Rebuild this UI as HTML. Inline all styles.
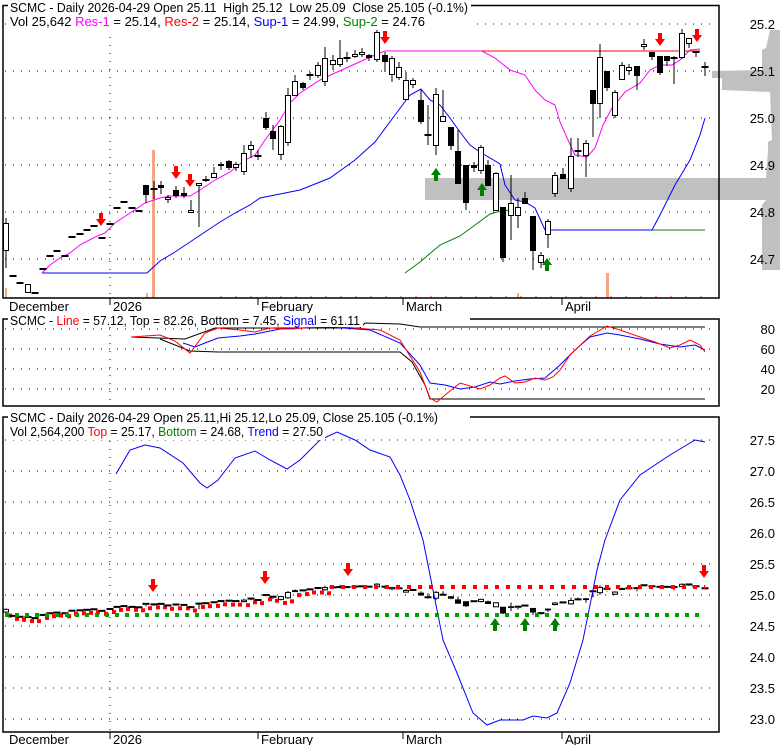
<!DOCTYPE html>
<html><head><meta charset="utf-8"><style>
html,body{margin:0;padding:0;background:#fff;}
svg{display:block;font-family:"Liberation Sans",Arial,sans-serif;}
</style></head><body>
<svg id="s" width="780" height="745" xmlns="http://www.w3.org/2000/svg">
<g id="bg"></g>
<polygon fill="#c0c0c0" points="780,30 770,30 766,48 762,50 762,70 712,71 712,78 722,78 722,90 770,92 772,140 768,142 768,150 766,178 425,178 425,200 766,200 762,205 762,270 768,270 780,270"/>
<g id="grid" stroke="#000" stroke-width="1" stroke-dasharray="1,7" fill="none"></g>
<g fill="#f4a582">
<rect x="152" y="150" width="3" height="148"/>
<rect x="606" y="273" width="3" height="25"/>
<rect x="5" y="288" width="2" height="10"/>
<rect x="146" y="293" width="2" height="5"/>
<rect x="517" y="293" width="2" height="5"/>
</g>
<g id="vticks" fill="#f4a582"></g>
<polyline fill="none" stroke="#008000" points="405,273 420,262 440,245 460,236 475,225 490,214 497,212 510,210" />
<polyline fill="none" stroke="#008000" points="652,230 705,230" />
<polyline fill="none" stroke="#0000ff" points="42,273 147,273 160,261 175,252 190,242 205,232 220,222 235,213 250,205 260,198 280,194 300,190 330,178 355,160 375,142 395,115 410,95 421,89 430,100 440,105 450,118 460,132 470,145 480,152 500,164 505,185 515,200 525,202 535,208 545,230 652,230 660,215 675,185 690,160 700,135 705,118" />
<polyline fill="none" stroke="#ff00ff" points="42,273 50,265 60,258 70,253 80,245 95,237 105,233 115,223 130,213 145,203 160,198 170,196 190,196 200,190 215,180 230,172 245,160 255,155 265,140 280,120 290,103 300,93 320,80 335,73 355,64 370,57 385,51 482,51 495,58 510,70 525,75 535,90 545,100 555,105 560,122 568,140 575,155 587,157 595,148 603,125 612,108 625,92 640,83 650,70 660,65 672,65 680,60 690,50 700,49" />
<line x1="482" y1="51" x2="700" y2="51" stroke="#ff0000"/>
<g id="candles"></g>
<g id="lower"></g>
<polyline fill="none" stroke="#000" points="131,337 185,339 215,328 360,328 365,323 400,324 420,327 705,327"/>
<polyline fill="none" stroke="#000" points="160,339 190,351 218,352 400,352 412,362 425,385 430,399 705,399"/>
<polyline fill="none" stroke="#0000ff" points="183,343 195,347 205,343 218,338 240,336 255,334 280,329 300,328 330,327 370,330 400,343 420,365 430,383 445,385 460,389 475,387 490,382 500,384 515,381 530,379 545,378 560,365 575,350 590,337 607,333 620,335 640,339 660,344 680,347 695,345 705,350"/>
<polyline fill="none" stroke="#ff0000" points="131,337 160,335 175,341 190,353 205,333 218,328 240,330 255,332 270,328 290,329 330,326 380,330 400,340 420,372 430,398 437,402 445,395 460,383 480,389 490,385 500,378 505,376 515,383 525,382 535,378 545,380 553,377 560,370 570,355 590,336 607,326 620,330 640,337 655,342 670,348 680,345 690,340 700,345 705,352"/>
<polyline fill="none" stroke="#0000ff" points="116,474 130,450 145,445 160,448 183,463 200,483 207,488 218,480 235,458 255,451 270,460 287,469 300,460 320,440 337,432 355,440 370,450 390,457 400,475 410,500 423,540 443,640 457,673 473,713 487,725 500,720 523,720 533,716 547,718 557,713 570,683 583,640 597,570 605,540 620,500 640,475 670,455 695,440 705,442"/>
<line x1="330" y1="587" x2="705" y2="587" stroke="#ff0000" stroke-width="4" stroke-dasharray="4,7"/>
<line x1="5" y1="615" x2="705" y2="615" stroke="#00a000" stroke-width="4" stroke-dasharray="4,6"/>
<g id="arrows"></g>
<g stroke="#000" fill="none" stroke-width="1.5">
<polyline points="470,5.5 719,5.5 719,298 3,298 3,5.5 8,5.5"/>
<polyline points="470,319 719,319 719,406 3,406 3,319 8,319"/>
<polyline points="470,417 719,417 719,732 3,732 3,417 8,417"/>
</g>
<g stroke="#000">
<line x1="110" y1="298" x2="110" y2="305"/><line x1="258" y1="298" x2="258" y2="305"/><line x1="403" y1="298" x2="403" y2="305"/><line x1="562" y1="298" x2="562" y2="305"/>
<line x1="110" y1="732" x2="110" y2="739"/><line x1="258" y1="732" x2="258" y2="739"/><line x1="403" y1="732" x2="403" y2="739"/><line x1="562" y1="732" x2="562" y2="739"/>
</g>
<g font-size="13" fill="#000">
<rect x="9" y="0" width="462" height="30" fill="#fff"/>
<text x="10" y="12" textLength="458" lengthAdjust="spacingAndGlyphs" xml:space="preserve">SCMC - Daily 2026-04-29 Open 25.11  High 25.12  Low 25.09  Close 25.105 (-0.1%)</text>
<text x="10" y="26">Vol 25,642 <tspan fill="#ff00ff">Res-1</tspan> = 25.14, <tspan fill="#ff0000">Res-2</tspan> = 25.14, <tspan fill="#0000ff">Sup-1</tspan> = 24.99, <tspan fill="#008000">Sup-2</tspan> = 24.76</text>
<text x="9" y="311">December</text><text x="113" y="311">2026</text><text x="261" y="311">February</text><text x="406" y="311">March</text><text x="565" y="311">April</text>
<rect x="9" y="313" width="354" height="14" fill="#fff"/>
<text x="10" y="325" textLength="350" lengthAdjust="spacingAndGlyphs">SCMC - <tspan fill="#ff0000">Line</tspan> = 57.12, Top = 82.26, Bottom = 7.45, <tspan fill="#0000ff">Signal</tspan> = 61.11</text>
<rect x="9" y="410" width="432" height="16" fill="#fff"/>
<rect x="9" y="426" width="316" height="14" fill="#fff"/>
<text x="10" y="422" textLength="428" lengthAdjust="spacingAndGlyphs">SCMC - Daily 2026-04-29 Open 25.11,Hi 25.12,Lo 25.09, Close 25.105 (-0.1%)</text>
<text x="10" y="436" textLength="313" lengthAdjust="spacingAndGlyphs">Vol 2,564,200 <tspan fill="#ff0000">Top</tspan> = 25.17, <tspan fill="#008000">Bottom</tspan> = 24.68, <tspan fill="#0000ff">Trend</tspan> = 27.50</text>
<text x="9" y="744">December</text><text x="113" y="744">2026</text><text x="261" y="744">February</text><text x="406" y="744">March</text><text x="565" y="744">April</text>
<g id="ylab"></g>
</g>
</svg>
<script>
var NS="http://www.w3.org/2000/svg";
function el(p,t,a){var e=document.createElementNS(NS,t);for(var k in a)e.setAttribute(k,a[k]);document.getElementById(p).appendChild(e);return e;}
[24,71,118,165,212,259].forEach(function(y){el('grid','line',{x1:5,y1:y,x2:715,y2:y});});
[329,349,369,389].forEach(function(y){el('grid','line',{x1:5,y1:y,x2:715,y2:y});});
[440,471,502,533,564,595,626,657,688,719].forEach(function(y){el('grid','line',{x1:5,y1:y,x2:715,y2:y});});
[[5,298],[319,406],[417,732]].forEach(function(r){el('grid','line',{x1:110,y1:r[0],x2:110,y2:r[1]});});
for(var x=220;x<715;x+=15){el('vticks','rect',{x:x,y:296,width:2,height:2});}
var yl=[["25.2",24],["25.1",71],["25.0",118],["24.9",165],["24.8",212],["24.7",259],["80",329],["60",349],["40",369],["20",389],
["27.5",440],["27.0",471],["26.5",502],["26.0",533],["25.5",564],["25.0",595],["24.5",626],["24.0",657],["23.5",688],["23.0",719]];
yl.forEach(function(l){var t=el('ylab','text',{x:775,y:l[1]+5,'text-anchor':'end'});t.textContent=l[0];});
var C=[[6,223,251,0,218,268],[13,276,276,2],[20,283,283,2],[28,284,293,0,284,293],[35,293,293,2],[43,269,269,2],[50,256,256,2],[57,251,251,2],[65,256,256,2],[72,237,237,2],[80,234,234,2],[87,230,230,2],[94,226,226,2],[102,238,238,2],[110,224,224,2],[117,208,208,2],[124,202,202,2],[132,208,208,2],[139,211,211,2],
[146,185,195,1,185,203],[154,189,189,2,181,199],[161,185,188,1,181,194],[168,197,200,0,195,203],[176,190,196,1,186,198],[184,193,196,1,187,198],[191,210,213,0,200,213],[199,183,186,0,183,227],[206,180,180,2,176,182],[214,173,178,0,167,178],[221,164,166,0,162,170],[229,161,168,1,160,170],[236,164,168,0,162,171],[244,153,172,0,145,175],[251,145,150,0,141,158],[258,156,157,0,150,160],
[266,118,128,1,112,130],[273,131,139,1,125,150],[281,126,155,0,125,160],[288,95,143,0,88,146],[295,81,96,0,75,96],[303,83,88,1,82,90],[310,75,76,2,72,80],[318,65,76,0,62,78],[325,58,82,0,47,86],[333,60,65,0,55,70],[340,58,65,0,40,67],[347,58,58,2,52,62],[355,54,57,0,50,58],[362,52,55,0,48,57],[369,55,58,1,54,61],[377,32,60,0,28,62],[385,55,62,1,52,72],
[392,58,75,0,56,82],[399,67,78,0,62,80],[406,80,100,0,72,100],[413,80,85,0,78,88],[421,100,122,1,90,124],[428,135,135,2,105,145],[436,94,146,0,88,155],[443,116,122,0,90,122],[451,127,146,1,127,150],[458,151,184,1,130,184],[466,165,203,1,165,210],[474,165,168,1,162,172],[481,147,171,0,145,174],[488,165,186,1,160,186],[496,173,211,0,172,211],[503,207,258,1,207,262],[511,203,216,0,175,240],[518,207,216,0,198,228],[525,198,204,1,192,204],[533,216,251,1,216,270],[541,255,263,0,252,268],[548,221,235,0,219,248],[555,175,194,0,172,197],[563,174,179,1,168,179],[571,156,189,0,138,192],[578,151,151,2,138,157],[586,143,156,0,140,177],[593,90,104,1,90,137],[600,57,104,0,44,118],[607,71,88,1,71,91],[615,92,116,0,90,118],[622,65,80,0,62,80],[629,67,71,0,64,75],[637,66,76,1,66,90],[644,44,47,0,39,50],[652,52,57,1,52,60],[660,56,73,1,56,75],[667,56,61,1,56,66],[674,58,58,2,56,84],[682,33,58,0,29,59],[689,38,44,0,38,48],[696,52,52,2,52,57],[705,67,67,1,62,76]];
function draw(g,x,t,b,ty,h,l,w){
 if(h!==undefined&&h<t)el(g,'line',{x1:x,y1:h,x2:x,y2:t,stroke:'#000'});
 if(l!==undefined&&l>b)el(g,'line',{x1:x,y1:b,x2:x,y2:l,stroke:'#000'});
 if(ty==2||b-t<1.5){el(g,'rect',{x:x-w/2-0.5,y:t-1,width:w+1,height:2,fill:'#000'});return;}
 if(ty==1)el(g,'rect',{x:x-w/2,y:t,width:w,height:b-t,fill:'#000'});
 else el(g,'rect',{x:x-w/2+0.5,y:t+0.5,width:w-1,height:b-t-1,fill:'#fff',stroke:'#000'});
}
function L(y){return 582.6+(y-24)*0.132;}
C.forEach(function(c){
 draw('candles',c[0],c[1],c[2],c[3],c[4],c[5],6);
 var t=L(c[1]),b=L(c[2]);
 draw('lower',c[0],t,b,(b-t<2.5&&c[3]==1)?2:c[3],c[4]!==undefined?L(c[4]):undefined,c[5]!==undefined?L(c[5]):undefined,6);
 if(c[0]<330)el('lower','rect',{x:c[0]+2,y:b+1,width:4,height:4,fill:'#ff0000'});
});
function arrow(x,y,down,col){
 var d=down?"M"+(x-2)+","+(y-9)+" h4 v6 h3 l-5,7 l-5,-7 h3z":"M"+(x-2)+","+(y+9)+" h4 v-6 h3 l-5,-7 l-5,7 h3z";
 el('arrows','path',{d:d,fill:col});
}
[[101,222],[176,175],[190,183],[385,40],[660,42],[697,38]].forEach(function(a){arrow(a[0],a[1],1,'#ff0000');});
[[436,172],[482,187],[547,262]].forEach(function(a){arrow(a[0],a[1],0,'#008000');});
[[153,588],[265,580],[348,572],[704,574]].forEach(function(a){arrow(a[0],a[1],1,'#ff0000');});
[[495,622],[525,622],[555,622]].forEach(function(a){arrow(a[0],a[1],0,'#008000');});
</script>
</body></html>
